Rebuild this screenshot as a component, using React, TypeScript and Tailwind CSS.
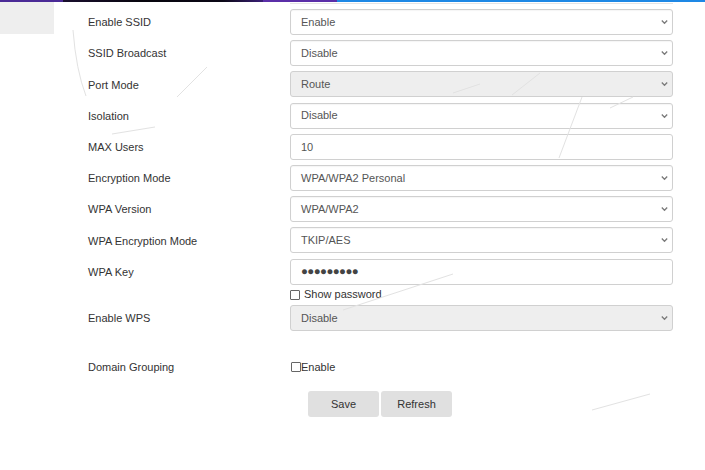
import React from 'react';

const font = { fontFamily: '"Liberation Sans", Arial, sans-serif' };

function Chevron() {
  return (
    <svg width="7" height="5" viewBox="0 0 7 5" className="absolute right-[4px] top-1/2 -translate-y-1/2">
      <path d="M0.8 1 L3.5 3.8 L6.2 1" fill="none" stroke="#7a7a7a" strokeWidth="1.3" />
    </svg>
  );
}

function Select({ value, disabled }: { value: string; disabled?: boolean }) {
  return (
    <div
      className={
        'relative h-[26px] w-full rounded-[3px] border border-[#d0d0d0] pl-[10px] flex items-center text-[11px] text-[#555] ' +
        (disabled ? 'bg-[#eeeeee]' : 'bg-white shadow-[inset_0_1px_1px_rgba(0,0,0,0.04)]')
      }
    >
      {value}
      <Chevron />
    </div>
  );
}

function TextBox({ value, password }: { value: string; password?: boolean }) {
  return (
    <div className="h-[26px] w-full rounded-[3px] border border-[#d0d0d0] bg-white pl-[10px] flex items-center text-[11px] text-[#555]">
      {password ? <span className="text-[11.5px] tracking-[-0.6px] text-[#444]">{value}</span> : value}
    </div>
  );
}

function Box() {
  return <span className="inline-block h-[10px] w-[10px] border border-[#666] rounded-[1px] bg-white" />;
}

function Row({ label, children, className }: { label: string; children: React.ReactNode; className?: string }) {
  return (
    <div className={'flex items-center ' + (className || '')}>
      <div className="w-[202px] pt-px text-[11px] text-[#333]">{label}</div>
      <div className="w-[383px]">{children}</div>
    </div>
  );
}

const rows: { label: string; kind: 'select' | 'text' | 'disabled'; value: string }[] = [
  { label: 'Enable SSID', kind: 'select', value: 'Enable' },
  { label: 'SSID Broadcast', kind: 'select', value: 'Disable' },
  { label: 'Port Mode', kind: 'disabled', value: 'Route' },
  { label: 'Isolation', kind: 'select', value: 'Disable' },
  { label: 'MAX Users', kind: 'text', value: '10' },
  { label: 'Encryption Mode', kind: 'select', value: 'WPA/WPA2 Personal' },
  { label: 'WPA Version', kind: 'select', value: 'WPA/WPA2' },
  { label: 'WPA Encryption Mode', kind: 'select', value: 'TKIP/AES' },
];

export default function App() {
  return (
    <div className="relative w-[705px] h-[470px] bg-white overflow-hidden" style={font}>
      {/* top strip */}
      <div className="flex h-[2px]">
        <div className="w-[63px] bg-[#4a2a96]" />
        <div className="w-[200px] bg-[linear-gradient(90deg,#1a0f2e,#07050d_40%,#0b0816_80%,#3a1f78)]" />
        <div className="w-[74px] bg-[#5b2fa8]" />
        <div className="flex-1 bg-[#1e88e5]" />
      </div>

      <div className="flex">
        <div className="w-[54px] shrink-0">
          <div className="h-[32px] bg-[#eeeeee]" />
        </div>

        <div className="pl-[34px] flex flex-col">
          <Row label="" className="mt-[1px]">
            <div className="h-px bg-[#e4e4e4]" />
          </Row>

          <div className="mt-[5px] flex flex-col gap-[5.2px]">
            {rows.map((r) => (
              <Row key={r.label} label={r.label}>
                {r.kind === 'text' ? (
                  <TextBox value={r.value} />
                ) : (
                  <Select value={r.value} disabled={r.kind === 'disabled'} />
                )}
              </Row>
            ))}
            <Row label="WPA Key">
              <TextBox value="●●●●●●●●●" password />
            </Row>
          </div>

          <Row label="" className="mt-[2px] h-[16px]">
            <div className="flex items-center gap-[4px] text-[11px] text-[#333]">
              <Box />
              <span>Show password</span>
            </div>
          </Row>

          <Row label="Enable WPS" className="mt-[2.4px]">
            <Select value="Disable" disabled />
          </Row>

          <Row label="Domain Grouping" className="mt-[26px] h-[20px]">
            <div className="flex items-center pl-px text-[11px] text-[#333]">
              <Box />
              <span>Enable</span>
            </div>
          </Row>

          <div className="mt-[14px] flex gap-[2px] pl-[220px]">
            <button className="h-[26px] w-[71px] rounded-[3px] bg-[#e0e0e0] text-[11px] text-[#333]">Save</button>
            <button className="h-[26px] w-[71px] rounded-[3px] bg-[#e0e0e0] text-[11px] text-[#333]">Refresh</button>
          </div>
        </div>
      </div>

      {/* faint background strokes */}
      <svg className="pointer-events-none absolute inset-0" width="705" height="470">
        <g fill="none" stroke="#e2e2e2" strokeWidth="1">
          <path d="M73 30 Q76 70 86 96" />
          <path d="M207 67 L177 97" />
          <path d="M112 134 L155 127" />
          <path d="M453 93 L480 84" />
          <path d="M512 95 L540 73" />
          <path d="M582 97 L559 158" />
          <path d="M610 108 L633 97" />
          <path d="M343 310 L453 274" />
          <path d="M592 410 L650 394" />
        </g>
      </svg>
    </div>
  );
}
